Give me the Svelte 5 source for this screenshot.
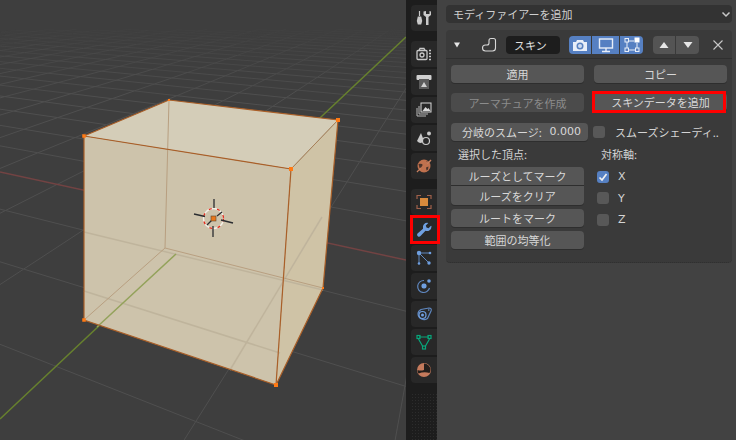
<script>
  // floor grid: homography fitted to the axes and cube in the reference
  const a = -0.0779;
  const b = 0.1246;
  const vx = [-947, -29];
  const vy = [480, -29];

  function project(u, v) {
    const w = 1 + a * u + b * v;
    return {
      w,
      x: (213 + u * a * vx[0] + v * b * vy[0]) / w,
      y: (218 + u * a * vx[1] + v * b * vy[1]) / w
    };
  }

  const levels = [0.12, 0.25, 0.4, 0.6, 0.8, 1];
  const buckets = levels.map(() => []);

  function addSegment(p, q) {
    if (p.w < 0.12 || q.w < 0.12) return;
    const outside =
      (p.x < -40 && q.x < -40) || (p.x > 450 && q.x > 450) || (p.y < -10 && q.y < -10) || (p.y > 480 && q.y > 480);
    if (outside) return;
    const depth = (p.w + q.w) / 2;
    const fade = 1 - depth / 4.2;
    if (fade <= 0) return;
    const idx = Math.min(levels.length - 1, Math.floor(fade * 1.6 * levels.length));
    buckets[idx].push(`M${p.x.toFixed(1)} ${p.y.toFixed(1)}L${q.x.toFixed(1)} ${q.y.toFixed(1)}`);
  }

  for (let n = -70; n <= 70; n++) {
    if (n === 0) continue;
    for (let t = -70; t < 70; t++) {
      addSegment(project(t, n), project(t + 1, n));
      addSegment(project(n, t), project(n, t + 1));
    }
  }
  const gridPaths = buckets.map((parts, i) => ({ d: parts.join(""), opacity: levels[i] }));

  // the back bottom corner has no dot in the reference
  const verts = [
    [84, 136, 3.5], [169, 100, 2], [338, 120, 4], [291, 169, 4],
    [84, 320, 3.5], [276, 385, 4], [323, 288, 2]
  ];
</script>

<div class="screen">
  <div class="viewport">
    <svg width="406" height="440" viewBox="0 0 406 440">
      {#each gridPaths as g}
        <path d={g.d} class="grid" opacity={g.opacity} />
      {/each}
      <line x1="0" y1="172" x2="406" y2="260" class="axis-x" />
      <line x1="0" y1="419" x2="406" y2="37" class="axis-y" />

      <polygon points="84,136 169,100 338,120 291,169" fill="#d4cdb8" />
      <polygon points="84,136 291,169 276,385 84,320" fill="#cdc3ab" />
      <polygon points="291,169 338,120 323,288 276,385" fill="#cfc3a6" />

      <g class="seen-through">
        <line x1="84" y1="232" x2="323" y2="290" />
        <line x1="84" y1="291" x2="280" y2="353" />
        <line x1="230" y1="370" x2="322" y2="217" />
      </g>
      <line x1="97" y1="327" x2="176" y2="254" class="axis-y-through" />

      <g class="hidden-edge">
        <line x1="169" y1="100" x2="165" y2="248" />
        <line x1="165" y1="248" x2="84" y2="320" />
        <line x1="165" y1="248" x2="323" y2="288" />
      </g>
      <g class="edge">
        <polyline points="84,136 169,100 338,120 323,288 276,385 84,320 84,136" />
        <line x1="84" y1="136" x2="291" y2="169" />
        <line x1="291" y1="169" x2="276" y2="385" />
      </g>
      <line x1="291" y1="169" x2="338" y2="120" class="edge-soft" />
      {#each verts as p}
        <rect x={p[0] - p[2] / 2} y={p[1] - p[2] / 2} width={p[2]} height={p[2]} class="vert" />
      {/each}

      <circle cx="213.500" cy="218.500" r="10" class="cursor-white" />
      <circle cx="213.500" cy="218.500" r="10" class="cursor-red" />
      <g class="cursor-arm">
        <line x1="214" y1="199" x2="214" y2="208" />
        <line x1="194" y1="214" x2="205" y2="216.500" />
        <line x1="221" y1="220" x2="233" y2="223" />
        <line x1="213" y1="237" x2="213" y2="226" />
        <line x1="207" y1="225" x2="212" y2="220" />
        <line x1="217" y1="216" x2="222" y2="212" />
      </g>
      <rect x="211" y="216" width="5" height="5" fill="#e8771c" stroke="#5a4630" stroke-width="0.6" />
    </svg>
  </div>

  <div class="tabs">
    <div class="tab">
      <svg viewBox="0 0 16 16" width="16" height="16">
        <path d="M3.500 1v5" stroke="#c9c9c9" stroke-width="1.200" fill="none" />
        <path d="M1.800 6.500h3.400l1 4.500-1 3.500H1.800l-1-3.500z" fill="#c9c9c9" />
        <path d="M7.500 1.500V5L10 7v8h2.500V7L15 5V1.500L13.500 1v3h-3.500V1z" fill="#c9c9c9" />
      </svg>
    </div>

    <div class="group">
      <div class="tab">
        <svg viewBox="0 0 16 16" width="16" height="16" fill="none" stroke="#c9c9c9" stroke-width="1.300">
          <rect x="1" y="4.500" width="10" height="9" rx="1" />
          <path d="M3 4.500l1-2h4l1 2" />
          <circle cx="6" cy="9" r="2" />
          <path d="M13 4.500h2M13 7.500h2M13 10.500h2M13 13.500h2" />
        </svg>
      </div>
      <div class="tab">
        <svg viewBox="0 0 16 16" width="16" height="16">
          <rect x="0.500" y="1" width="15" height="5" rx="1" fill="#d0d0d0" />
          <rect x="3" y="5" width="10" height="10" fill="#5c5c5c" />
          <path d="M5 13l3-5 3 5z" fill="#d0d0d0" />
        </svg>
      </div>
      <div class="tab">
        <svg viewBox="0 0 16 16" width="16" height="16" fill="none" stroke="#b8b8b8">
          <rect x="5" y="1" width="10" height="9" stroke="#d8d8d8" />
          <path d="M6.500 9l3-4 2 2 1-1 2 3z" fill="#d8d8d8" stroke="none" />
          <path d="M3 4v8h9" />
          <path d="M1 6v8h9" />
        </svg>
      </div>
      <div class="tab">
        <svg viewBox="0 0 16 16" width="16" height="16">
          <path d="M5 3L8 11H1z M1 11q3.500 4 7 0" fill="#c9c9c9" />
          <circle cx="13" cy="3.500" r="2" fill="#c9c9c9" />
          <circle cx="10" cy="11" r="3.500" fill="#282828" stroke="#c9c9c9" stroke-width="1.200" />
        </svg>
      </div>
      <div class="tab">
        <svg viewBox="0 0 16 16" width="16" height="16">
          <circle cx="8" cy="8" r="6.500" fill="#c0714e" />
          <path d="M2.500 6q3.500-.5 4 .5t-1.500 3L3.500 10M10 2.500q.5 1.500 2 2l1 .5M10 9.500l2.500-1-.5 3-1.500 1z" fill="#4a332a" />
          <path d="M1 14Q3 11.500 5 10.500M15 2Q13 4.500 11 5.500" stroke="#c98060" stroke-width="1.300" fill="none" />
        </svg>
      </div>
    </div>

    <div class="group">
      <div class="tab">
        <svg viewBox="0 0 16 16" width="16" height="16" fill="none" stroke="#a0604a" stroke-width="1.200">
          <path d="M1 5V1.500h4M11 1.500h4V5M15 11v3.500h-4M5 14.500H1V11" />
          <rect x="4" y="4" width="8" height="8" fill="#d98a3c" stroke="none" />
        </svg>
      </div>
      <div class="tab marked-tab">
        <svg viewBox="0 0 16 16" width="16" height="16">
          <path d="M15.500 4.500a4.500 4.500 0 0 1-6 4.300L4.500 14a1.900 1.900 0 0 1-3-2.400L7 6.800A4.500 4.500 0 0 1 12.300 1L9.800 3.500l.7 2 2 .7L15 3.800q.5.300.5.7z" fill="#6f9fe0" />
        </svg>
      </div>
      <div class="tab">
        <svg viewBox="0 0 16 16" width="16" height="16" stroke="#5f87bf" fill="#6f9fe0">
          <path d="M3 3h11M3 3v10M3 3l10 10" fill="none" stroke-width="1" />
          <circle cx="3" cy="3" r="2.200" stroke="none" />
          <circle cx="14" cy="3" r="1.300" stroke="none" />
          <circle cx="3" cy="13.500" r="1.300" stroke="none" />
          <circle cx="13" cy="13" r="1.700" stroke="none" />
        </svg>
      </div>
      <div class="tab">
        <svg viewBox="0 0 16 16" width="16" height="16" fill="none" stroke="#5f87bf" stroke-width="1.200">
          <path d="M8 2.500A6 6 0 1 0 13.500 10" />
          <rect x="5.500" y="5.500" width="5" height="5" rx="2" fill="#6f9fe0" stroke="none" />
          <circle cx="13" cy="3" r="1.800" fill="#6f9fe0" stroke="none" />
        </svg>
      </div>
      <div class="tab">
        <svg viewBox="0 0 16 16" width="16" height="16" fill="none" stroke="#6f9fe0" stroke-width="1.200">
          <path d="M2 8a6 6 0 0 0 9.500 4.500L15 5q1-3-2-3l-8 1.500Q2 5 2 8z" stroke="#5f87bf" />
          <circle cx="6.500" cy="9" r="3.500" />
          <circle cx="6.500" cy="9" r="1.500" fill="#6f9fe0" stroke="none" />
          <circle cx="12.800" cy="4" r="0.800" fill="#6f9fe0" stroke="none" />
        </svg>
      </div>
      <div class="tab">
        <svg viewBox="0 0 16 16" width="16" height="16" fill="none" stroke="#08a67a" stroke-width="1.200">
          <path d="M3 3h10M2.500 5l4 7M13.500 5l-4 7" />
          <rect x="1" y="1.500" width="3" height="3" />
          <rect x="12" y="1.500" width="3" height="3" />
          <rect x="6.500" y="12" width="3" height="3" />
        </svg>
      </div>
      <div class="tab">
        <svg viewBox="0 0 16 16" width="16" height="16">
          <circle cx="8" cy="8" r="7" fill="#c57a5c" />
          <path d="M8 1.500a6.500 6.500 0 0 1 6.500 6.500H8z" fill="#241f1c" />
          <path d="M1.500 8q3 1 6.500 0t6.500 0a6.500 6.500 0 0 1-1 3Q8 9.500 2.500 11.500q-1-1.500-1-3.500z" fill="#241f1c" />
        </svg>
      </div>
    </div>
    <div class="tabs-rest"></div>
  </div>

  <div class="panel">
    <div class="add-modifier">
      <span>モディファイアーを追加</span>
      <svg viewBox="0 0 10 10" width="10" height="10"><path d="M1.500 3.500L5 7l3.500-3.500" fill="none" stroke="#c8c8c8" stroke-width="1.500" /></svg>
    </div>

    <div class="modifier">
      <div class="head">
        <svg class="caret" viewBox="0 0 8 6" width="8" height="6"><path d="M1 0.500h6L4 5.500z" fill="#e6e6e6" /></svg>
        <svg class="skin-icon" viewBox="0 0 16 16" width="16" height="16">
          <path d="M10 1.500h2.500q2 0 2 2V11q0 3-3 3h-7q-3 0-3-3t3-3H6q2 0 2-2V3.500q0-2 2-2z" fill="none" stroke="#d8d8d8" stroke-width="1.100" />
        </svg>
        <div class="name">スキン</div>
        <div class="toggles">
          <button class="on first">
            <svg viewBox="0 0 16 16" width="16" height="16">
              <path d="M1 5h3l1-2h6l1 2h3v9H1z" fill="#e8eef8" />
              <circle cx="8" cy="9" r="3.500" fill="#5a82c0" />
              <circle cx="8" cy="9" r="2" fill="#cfdcf0" />
            </svg>
          </button>
          <button class="on mid">
            <svg viewBox="0 0 16 16" width="16" height="16" fill="none" stroke="#e8eef8" stroke-width="1.400">
              <rect x="1.500" y="2" width="13" height="9" />
              <path d="M8 11v3M4 14.500h8" />
            </svg>
          </button>
          <button class="on last">
            <svg viewBox="0 0 16 16" width="16" height="16" fill="none" stroke="#e8eef8">
              <path d="M3 4h7M3 4v8M3 13h10M13 6v6" />
              <rect x="1" y="1.500" width="3.500" height="3.500" fill="#5a82c0" />
              <rect x="1" y="11" width="3.500" height="3.500" fill="#5a82c0" />
              <rect x="11.500" y="11" width="3.500" height="3.500" fill="#5a82c0" />
              <rect x="10.500" y="0.500" width="5" height="5" fill="#fff" stroke="none" />
            </svg>
          </button>
        </div>
        <div class="arrows">
          <button class="first"><svg viewBox="0 0 10 8" width="10" height="8"><path d="M5 1l4.500 6H.5z" fill="#e6e6e6" /></svg></button>
          <button class="last"><svg viewBox="0 0 10 8" width="10" height="8"><path d="M5 7L.5 1h9z" fill="#e6e6e6" /></svg></button>
        </div>
        <svg class="close" viewBox="0 0 12 12" width="12" height="12"><path d="M1.500 1.500l9 9M10.500 1.500l-9 9" stroke="#c8c8c8" stroke-width="1.100" /></svg>
      </div>

      <div class="body">
        <div class="row first-row">
          <button class="btn">適用</button>
          <button class="btn">コピー</button>
        </div>
        <div class="row second-row">
          <button class="btn disabled">アーマチュアを作成</button>
          <button class="btn marked">スキンデータを追加</button>
        </div>
        <div class="smooth-row">
          <div class="field"><span>分岐のスムージ:</span><span class="num">0.000</span></div>
          <span class="box smooth-box"></span>
          <span class="label">スムーズシェーディ..</span>
        </div>

        <div class="columns">
          <div class="vertices">
            <div class="title">選択した頂点:</div>
            <div class="stack">
              <button class="btn joined-top">ルーズとしてマーク</button>
              <button class="btn joined-bottom">ルーズをクリア</button>
            </div>
            <button class="btn root">ルートをマーク</button>
            <button class="btn even">範囲の均等化</button>
          </div>
          <div class="axes">
            <div class="title">対称軸:</div>
            <div class="axis first-axis">
              <span class="box checked">
                <svg viewBox="0 0 12 12" width="12" height="12"><path d="M2.500 6.500L5 9l4.500-6" fill="none" stroke="#f0f0f0" stroke-width="1.700" /></svg>
              </span>
              <span class="latin">X</span>
            </div>
            <div class="axis"><span class="box"></span><span class="latin">Y</span></div>
            <div class="axis"><span class="box"></span><span class="latin">Z</span></div>
          </div>
        </div>
      </div>
    </div>
  </div>
</div>

<style>
  :global(body) {
    margin: 0;
    background: #424242;
  }

  .screen {
    display: grid;
    grid-template-columns: 406px 31px 299px;
    width: 736px;
    height: 440px;
    overflow: hidden;
    font-family: "Noto Sans CJK JP", "DejaVu Sans", sans-serif;
    font-size: 11px;
    color: #d4d4d4;
  }

  .viewport {
    background: #3e3e3e;
    height: 440px;
  }

  .viewport svg {
    display: block;
  }

  .grid {
    fill: none;
    stroke: #4f4f4f;
    stroke-width: 1;
  }

  .axis-x {
    stroke: #724343;
    stroke-width: 1.500;
  }

  .axis-y {
    stroke: #67812e;
    stroke-width: 1.500;
  }

  .axis-y-through {
    stroke: #93a25a;
    stroke-width: 1.500;
  }

  .seen-through line {
    stroke: #bfb49c;
    stroke-width: 1.500;
  }

  .hidden-edge line {
    stroke: #b89f80;
    stroke-width: 1;
  }

  .edge polyline,
  .edge line {
    fill: none;
    stroke: #aa5f28;
    stroke-width: 1.200;
  }

  .edge-soft {
    stroke: #a88058;
    stroke-width: 1;
  }

  .vert {
    fill: #ff7a14;
  }

  .cursor-white,
  .cursor-red {
    fill: none;
    stroke-width: 1.300;
  }

  .cursor-white {
    stroke: #f4f0e8;
  }

  .cursor-red {
    stroke: #e02a1a;
    stroke-dasharray: 3 5.400;
  }

  .cursor-arm line {
    stroke: #2a2c30;
    stroke-width: 1.300;
  }

  .tabs {
    display: flex;
    flex-direction: column;
    align-items: flex-end;
    gap: 10px;
    padding-top: 5px;
    box-sizing: border-box;
    height: 440px;
    background: #1d1d1d;
  }

  .group {
    display: flex;
    flex-direction: column;
    gap: 2px;
  }

  .tab {
    position: relative;
    display: flex;
    align-items: center;
    justify-content: center;
    width: 26px;
    height: 26px;
    background: #282828;
    border-radius: 4px 0 0 4px;
  }

  .tabs-rest {
    width: 26px;
    flex: 1;
    background-image: radial-gradient(#2c2c2c 0.6px, transparent 0.8px);
    background-size: 3px 3px;
  }

  .marked-tab::after {
    content: "";
    position: absolute;
    left: -1px;
    top: -2px;
    width: 24px;
    height: 23px;
    border: 3px solid #ff0000;
  }

  .panel {
    background: #424242;
    padding: 5px 4px 0 9px;
  }

  .add-modifier {
    display: flex;
    align-items: center;
    justify-content: space-between;
    height: 18px;
    padding: 0 1px 0 7px;
    background: #333;
    border-radius: 4px;
    color: #cfcfcf;
    line-height: 18px;
  }

  .modifier {
    margin-top: 7px;
    height: 233px;
    box-sizing: border-box;
    background: #3a3a3a;
    border-radius: 4px;
    border-bottom: 1px dotted #2e2e2e;
  }

  .head {
    display: flex;
    align-items: center;
    height: 27px;
    padding-top: 1px;
    border-bottom: 1px solid #2f2f2f;
  }

  .caret {
    margin-left: 7px;
    margin-right: 20px;
  }

  .skin-icon {
    margin-right: 9px;
  }

  .name {
    width: 46px;
    height: 18px;
    padding-left: 8px;
    background: #1d1d1d;
    border-radius: 4px;
    line-height: 18px;
    color: #e0e0e0;
  }

  .toggles,
  .arrows {
    display: flex;
    gap: 1px;
    height: 18px;
  }

  .toggles {
    margin-left: 9px;
  }

  .arrows {
    margin-left: 10px;
  }

  .head button {
    display: flex;
    align-items: center;
    justify-content: center;
    padding: 0;
    border: 0;
    border-radius: 0;
    height: 18px;
    background: #545454;
  }

  .toggles button {
    background: #5680c2;
  }

  .first {
    width: 22px;
    border-radius: 4px 0 0 4px !important;
  }

  .mid {
    width: 27px;
  }

  .last {
    width: 23px;
    border-radius: 0 4px 4px 0 !important;
  }

  .close {
    margin-left: 13px;
  }

  .body {
    padding: 6px 5px 0;
  }

  .row {
    display: grid;
    grid-template-columns: 133px 133px;
    column-gap: 10px;
  }

  .second-row {
    margin-top: 10px;
  }

  .btn {
    display: block;
    width: 133px;
    height: 18px;
    padding: 0;
    border: 0;
    border-radius: 4px;
    background: #565656;
    box-shadow: 0 1px 0 #2e2e2e;
    color: #d8d8d8;
    font: inherit;
    line-height: 18px;
    text-align: center;
  }

  .disabled {
    height: 19px;
    background: #4b4b4b;
    color: #8c8c8c;
    box-shadow: none;
  }

  .marked {
    position: relative;
  }

  .marked::after {
    content: "";
    position: absolute;
    left: -2px;
    top: -2px;
    width: 128px;
    height: 16px;
    border: 3px solid #ff0000;
  }

  .smooth-row {
    display: flex;
    align-items: center;
    height: 18px;
    margin-top: 11px;
  }

  .field {
    display: flex;
    justify-content: space-between;
    box-sizing: border-box;
    width: 137px;
    height: 18px;
    padding: 0 7px 0 11px;
    border-radius: 4px;
    background: #565656;
    box-shadow: 0 1px 0 #2e2e2e;
    color: #d8d8d8;
    line-height: 18px;
  }

  .num,
  .latin {
    font-family: "DejaVu Sans", sans-serif;
  }

  .box {
    display: block;
    width: 12px;
    height: 12px;
    border-radius: 3px;
    background: #585858;
    flex-shrink: 0;
  }

  .smooth-box {
    margin-left: 5px;
  }

  .label {
    margin-left: 10px;
    white-space: nowrap;
    width: 112px;
    overflow: hidden;
  }

  .columns {
    display: grid;
    grid-template-columns: 133px 133px;
    column-gap: 13px;
    margin-top: 5px;
  }

  .title {
    height: 17px;
    line-height: 17px;
  }

  .vertices .title {
    padding-left: 7px;
    margin-bottom: 4px;
  }

  .joined-top {
    border-radius: 4px 4px 0 0;
    margin-bottom: 1px;
  }

  .joined-bottom {
    height: 19px;
    border-radius: 0 0 4px 4px;
  }

  .root,
  .even {
    margin-top: 4px;
  }

  .axes .title {
    padding-left: 4px;
  }

  .axis {
    display: flex;
    align-items: center;
    gap: 9px;
    height: 21.500px;
    color: #d4d4d4;
  }

  .first-axis {
    margin-top: 3px;
  }

  .checked {
    background: #5680c2;
  }

  .checked svg {
    display: block;
  }
</style>
